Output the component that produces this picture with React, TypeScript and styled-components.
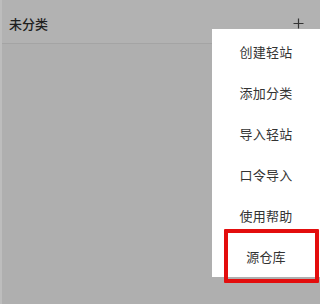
import React from "react";
import styled, { createGlobalStyle } from "styled-components";

const GlobalStyle = createGlobalStyle`
  html, body { margin: 0; padding: 0; background: #afafaf; }
  * { box-sizing: border-box; }
`;

const Page = styled.div`
  position: relative;
  width: 320px;
  height: 304px;
  overflow: hidden;
  background: #afafaf;
  border-left: 2px solid #bdbdbd;
  font-family: "Noto Sans CJK SC", "Noto Sans", sans-serif;
`;

const Header = styled.div`
  height: 44px;
  display: flex;
  align-items: center;
  justify-content: space-between;
  padding: 4px 16px 0 7px;
  border-bottom: 1px solid #a4a4a4;
  background: #b2b2b2;
`;

const Title = styled.span`
  font-size: 13px;
  font-weight: 500;
  color: #1e1e1e;
`;

const PlusIcon = styled.svg`
  width: 11px;
  height: 11px;
  display: block;
`;

const Menu = styled.div`
  position: absolute;
  top: 29px;
  right: 0;
  width: 108px;
  padding-top: 2px;
  background: #ffffff;
  display: flex;
  flex-direction: column;
`;

const MenuItem = styled.div`
  height: 41px;
  display: flex;
  align-items: center;
  justify-content: center;
  font-size: 13px;
  color: #333333;
  letter-spacing: 0.2px;
`;

const Highlight = styled.div`
  position: absolute;
  left: 222px;
  top: 229px;
  width: 95px;
  height: 54px;
  border: 4px solid #e30d0d;
  border-radius: 1px;
`;

const items = ["创建轻站", "添加分类", "导入轻站", "口令导入", "使用帮助", "源仓库"];

export default function App() {
  return (
    <>
      <GlobalStyle />
      <Page>
        <Header>
          <Title>未分类</Title>
          <PlusIcon viewBox="0 0 11 11">
            <path d="M5.5 0.5v10M0.5 5.5h10" stroke="#333" strokeWidth="1.2" fill="none" />
          </PlusIcon>
        </Header>
        <Menu>
          {items.map((t) => (
            <MenuItem key={t}>{t}</MenuItem>
          ))}
        </Menu>
        <Highlight />
      </Page>
    </>
  );
}
